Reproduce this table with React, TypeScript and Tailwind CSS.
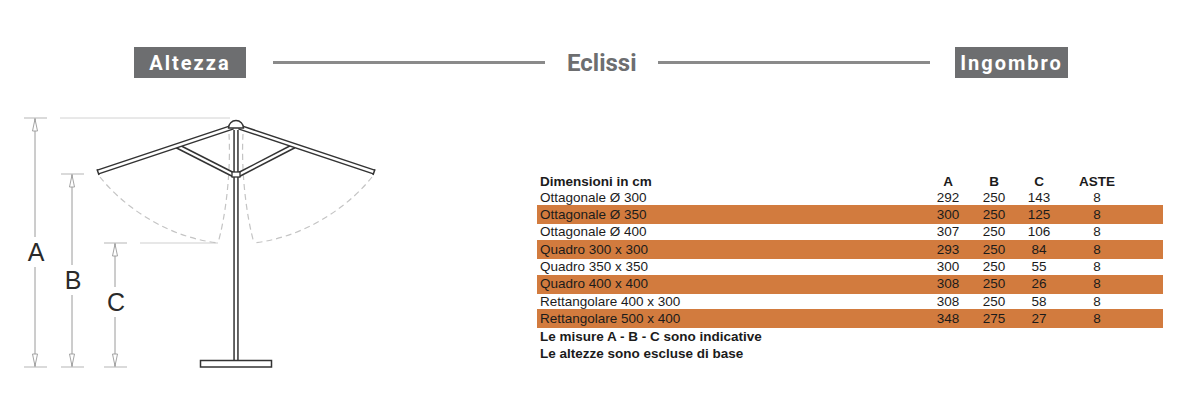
import React from 'react';

interface Row {
  label: string;
  a: string;
  b: string;
  c: string;
  aste: string;
}

const rows: Row[] = [
  { label: 'Ottagonale Ø 300', a: '292', b: '250', c: '143', aste: '8' },
  { label: 'Ottagonale Ø 350', a: '300', b: '250', c: '125', aste: '8' },
  { label: 'Ottagonale Ø 400', a: '307', b: '250', c: '106', aste: '8' },
  { label: 'Quadro 300 x 300', a: '293', b: '250', c: '84', aste: '8' },
  { label: 'Quadro 350 x 350', a: '300', b: '250', c: '55', aste: '8' },
  { label: 'Quadro 400 x 400', a: '308', b: '250', c: '26', aste: '8' },
  { label: 'Rettangolare 400 x 300', a: '308', b: '250', c: '58', aste: '8' },
  { label: 'Rettangolare 500 x 400', a: '348', b: '275', c: '27', aste: '8' },
];

const gridCols = 'grid grid-cols-[388px_46px_46px_44px_72px_1fr] items-center';

// double-line bar: dark stroke with a white core
const Bar = ({ x1, y1, x2, y2 }: { x1: number; y1: number; x2: number; y2: number }) => (
  <g>
    <line x1={x1} y1={y1} x2={x2} y2={y2} stroke="#333" strokeWidth={5.4} strokeLinecap="butt" />
    <line x1={x1} y1={y1} x2={x2} y2={y2} stroke="#fff" strokeWidth={2.4} strokeLinecap="butt" />
  </g>
);

const Arrow = ({ x, y, dir }: { x: number; y: number; dir: 'up' | 'down' }) => {
  const back = dir === 'up' ? y + 12 : y - 12;
  return (
    <polygon
      points={`${x},${y} ${x - 2.5},${back} ${x + 2.5},${back}`}
      fill="#fff"
      stroke="#9a9a9a"
      strokeWidth={0.9}
    />
  );
};

const Dimension = ({ x, top, bottom, label, ly }: { x: number; top: number; bottom: number; label: string; ly: number }) => (
  <g>
    <line x1={x - 11} y1={top} x2={x + 12} y2={top} stroke="#b5b5b5" strokeWidth={1} />
    <line x1={x - 11} y1={bottom} x2={x + 12} y2={bottom} stroke="#b5b5b5" strokeWidth={1} />
    <line x1={x} y1={top} x2={x} y2={ly - 15} stroke="#9a9a9a" strokeWidth={1} />
    <line x1={x} y1={ly + 15} x2={x} y2={bottom} stroke="#9a9a9a" strokeWidth={1} />
    <Arrow x={x} y={top + 1} dir="up" />
    <Arrow x={x} y={bottom - 1} dir="down" />
    <text
      x={x + 1}
      y={ly + 9}
      textAnchor="middle"
      fontFamily="'Liberation Sans', Arial, sans-serif"
      fontSize={25}
      fill="#2a2a2a"
    >
      {label}
    </text>
  </g>
);

const UmbrellaDrawing = () => (
  <svg width={400} height={280} viewBox="0 100 400 280" className="shrink-0">
    {/* reference lines */}
    <line x1={60} y1={118} x2={230} y2={118} stroke="#d2d2d2" strokeWidth={1} />
    <line x1={140} y1={243} x2={218} y2={243} stroke="#cfcfcf" strokeWidth={1} />

    {/* swing paths of the ribs */}
    <g fill="none" stroke="#c4c4c4" strokeWidth={1.2} strokeDasharray="6 4">
      <path d="M100,177 C118,200 160,236 218,243" />
      <path d="M229,134 C231,170 226,215 218,243" />
      <path d="M372,177 C354,200 312,236 254,243" />
      <path d="M243,134 C241,170 246,215 254,243" />
    </g>

    <Dimension x={35} top={118} bottom={367} label="A" ly={252} />
    <Dimension x={72} top={174} bottom={367} label="B" ly={280} />
    <Dimension x={115} top={243} bottom={367} label="C" ly={302} />

    {/* pole */}
    <Bar x1={236} y1={130} x2={236} y2={361} />
    {/* struts */}
    <Bar x1={177} y1={146} x2={234} y2={175} />
    <Bar x1={294} y1={146} x2={238} y2={175} />
    {/* ribs */}
    <Bar x1={233} y1={127} x2={98} y2={172} />
    <Bar x1={239} y1={127} x2={374} y2={172} />
    <line x1={97} y1={169.3} x2={99} y2={175} stroke="#333" strokeWidth={1.5} />
    <line x1={375} y1={169.3} x2={373} y2={175} stroke="#333" strokeWidth={1.5} />
    {/* runner */}
    <rect x={232} y={172} width={8} height={5} fill="#fff" stroke="#333" strokeWidth={1.3} />
    {/* top cap */}
    <path d="M228.5,128 A7.5,7.5 0 0 1 243.5,128 Z" fill="#fff" stroke="#333" strokeWidth={1.4} />
    {/* base */}
    <rect x={200.5} y={360.5} width={71} height={6.5} fill="#fff" stroke="#333" strokeWidth={1.5} />
  </svg>
);

const TitleBox = ({ children }: { children: React.ReactNode }) => (
  <div className="bg-[#6d6e70] h-[31px] flex items-center justify-center text-white font-bold text-[20px] tracking-[2px] leading-none">
    {children}
  </div>
);

export default function App() {
  return (
    <div className="w-[1200px] h-[407px] bg-white overflow-hidden pt-[47px] font-['Roboto',sans-serif]">
      {/* header */}
      <div className="flex items-center h-[31px] pl-[134px]">
        <div className="w-[112px]">
          <TitleBox>Altezza</TitleBox>
        </div>
        <div className="ml-[27px] w-[272px] h-[3px] bg-[#8a8a8a]" />
        <div className="ml-[22px] w-[66px] text-center text-[#6d6e70] font-bold text-[24px] leading-none">
          Eclissi
        </div>
        <div className="ml-[25px] w-[272px] h-[3px] bg-[#8a8a8a]" />
        <div className="ml-[25px] w-[113px]">
          <TitleBox>Ingombro</TitleBox>
        </div>
      </div>

      <div className="flex mt-[22px]">
        <UmbrellaDrawing />

        {/* table */}
        <div className="ml-[137px] mt-[73px] w-[626px] text-[13.5px] leading-none text-[#1b1b1b] font-['Liberation_Sans',Arial,sans-serif]">
          <div className={`${gridCols} h-[16.5px] font-bold`}>
            <div className="pl-[3px]">Dimensioni in cm</div>
            <div className="text-center">A</div>
            <div className="text-center">B</div>
            <div className="text-center">C</div>
            <div className="text-center">ASTE</div>
            <div />
          </div>
          {rows.map((row, i) => (
            <div
              key={row.label}
              className={`${gridCols} ${i % 2 === 1 ? 'bg-[#d27b3e] h-[19px]' : 'h-[15.7px]'}`}
            >
              <div className="pl-[3px] whitespace-nowrap">{row.label}</div>
              <div className="text-center">{row.a}</div>
              <div className="text-center">{row.b}</div>
              <div className="text-center">{row.c}</div>
              <div className="text-center">{row.aste}</div>
              <div />
            </div>
          ))}
          <div className="font-bold pl-[3px]">
            <div className="h-[17px] flex items-center">Le misure A - B - C sono indicative</div>
            <div className="h-[17px] flex items-center">Le altezze sono escluse di base</div>
          </div>
        </div>
      </div>
    </div>
  );
}
